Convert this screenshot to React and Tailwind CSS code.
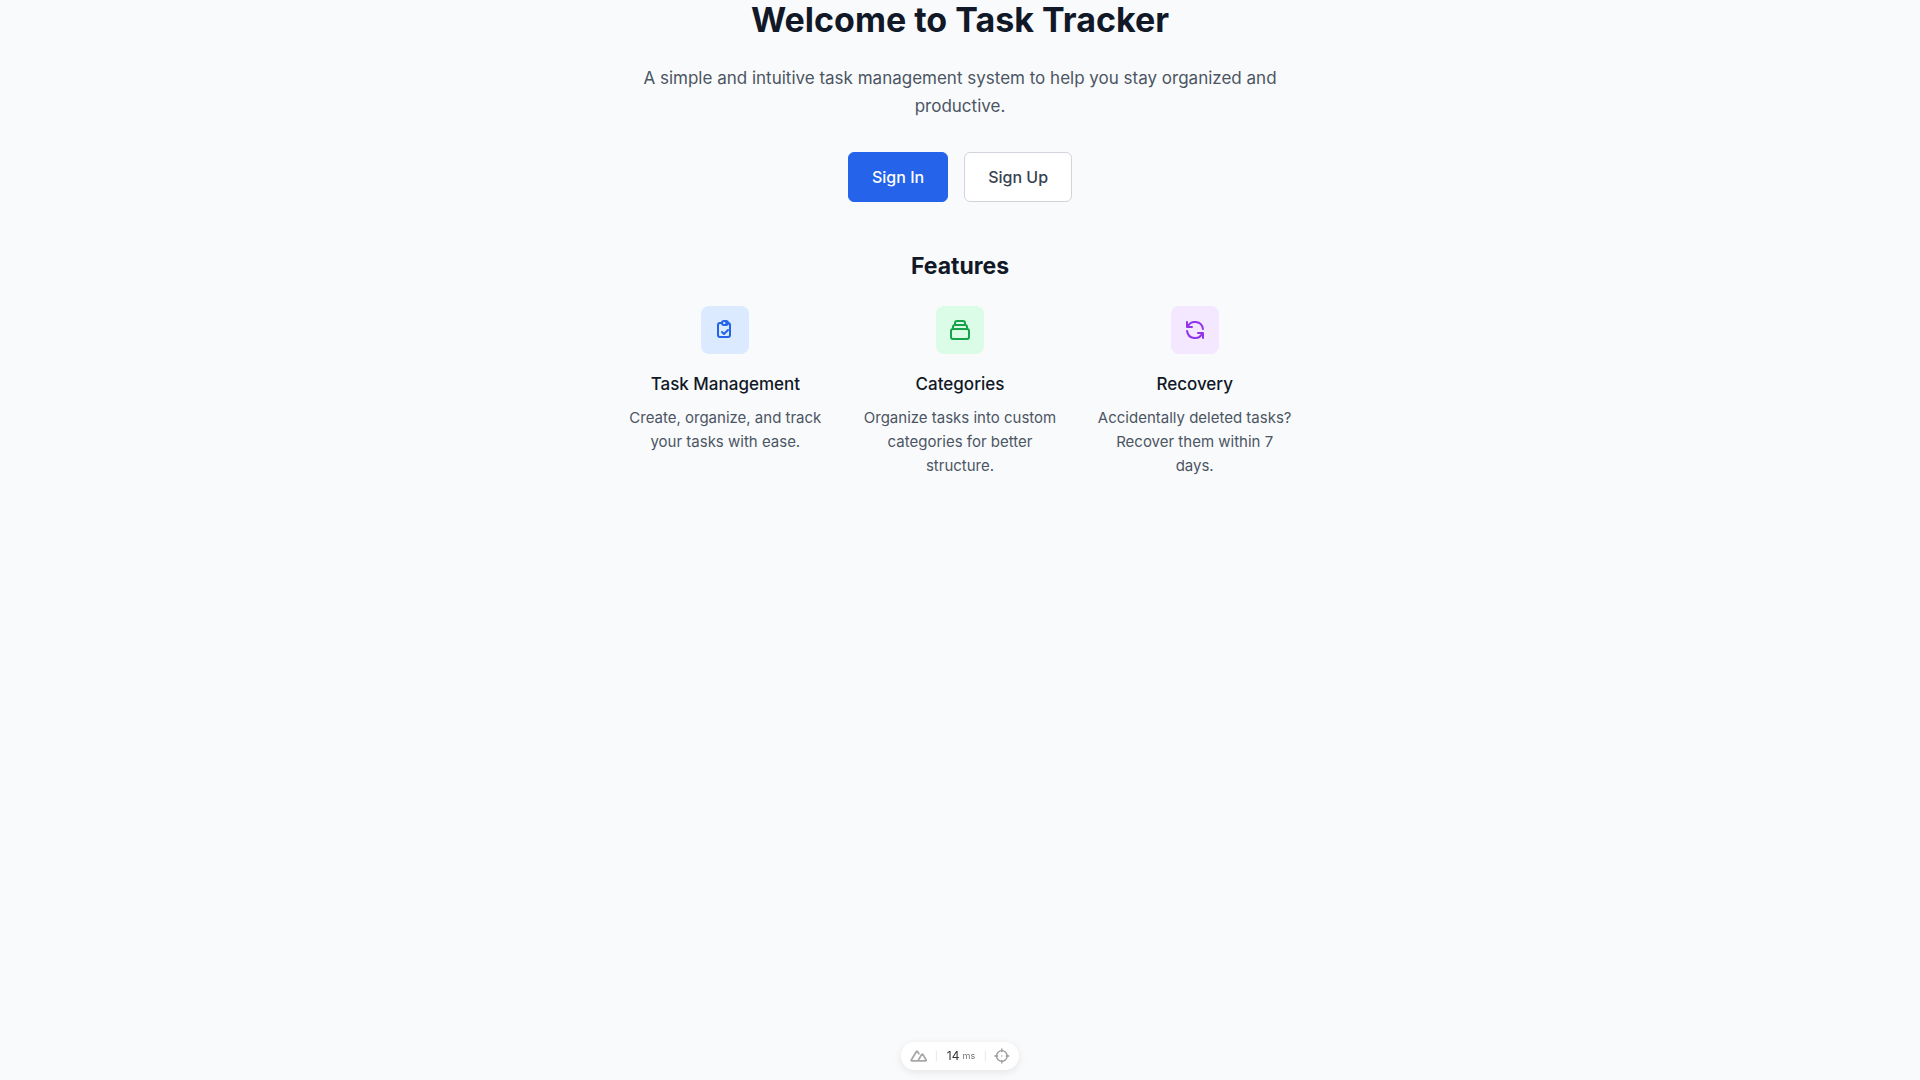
import React from 'react';

const features = [
  {
    title: 'Task Management',
    text: 'Create, organize, and track your tasks with ease.',
    tone: 'bg-blue-100 text-[#2563eb]',
    d: 'M9 5H7a2 2 0 00-2 2v10a2 2 0 002 2h8a2 2 0 002-2V7a2 2 0 00-2-2h-2M9 5a2 2 0 002 2h2a2 2 0 002-2M9 5a2 2 0 012-2h2a2 2 0 012 2m-6 9l2 2 4-4',
  },
  {
    title: 'Categories',
    text: 'Organize tasks into custom categories for better structure.',
    tone: 'bg-green-100 text-[#16a34a]',
    d: 'M19 11H5m14 0a2 2 0 012 2v6a2 2 0 01-2 2H5a2 2 0 01-2-2v-6a2 2 0 012-2m14 0V9a2 2 0 00-2-2M5 11V9a2 2 0 012-2m0 0V5a2 2 0 012-2h6a2 2 0 012 2v2M7 7h10',
  },
  {
    title: 'Recovery',
    text: 'Accidentally deleted tasks? Recover them within 7 days.',
    tone: 'bg-purple-100 text-[#9333ea]',
    d: 'M4 4v5h.582m15.356 2A8.001 8.001 0 004.582 9m0 0H9m11 11v-5h-.581m0 0a8.003 8.003 0 01-15.357-2m15.357 2H15',
  },
];

function Feature({ title, text, tone, d }) {
  return (
    <article className="flex flex-col items-center">
      <div className={`mb-4 flex size-12 items-center justify-center rounded-lg ${tone}`}>
        <svg className="size-6" viewBox="0 0 24 24" fill="none" stroke="currentColor" strokeWidth="2" strokeLinecap="round" strokeLinejoin="round" aria-hidden="true">
          <path d={d} />
        </svg>
      </div>
      <h3 className="mb-2 text-[17px] leading-7 font-medium text-[#111827]">{title}</h3>
      <p className="px-0.5 text-[15px] leading-6 text-[#4b5563]">{text}</p>
    </article>
  );
}

function DevPanel() {
  return (
    <div className="fixed bottom-2.5 left-1/2 flex h-7 -translate-x-1/2 items-center rounded-full bg-white px-[9px] shadow-[0_2px_8px_rgba(0,0,0,0.09)]">
      <button type="button" aria-label="Toggle devtools" className="flex text-[#a8a8a8]">
        <svg className="h-3.5 w-[18px]" viewBox="0 0 20 14" fill="none" stroke="currentColor" strokeWidth="2" strokeLinejoin="round" aria-hidden="true">
          <path d="M10 12.500H2.200c-.6 0-.9-.6-.6-1.100L7.300 2c.3-.5.900-.5 1.200 0l1.900 3.200M10.200 12.500h7.300c.6 0 .9-.6.6-1.100l-3.700-6.200c-.3-.5-.9-.5-1.200 0l-4.300 7.300" />
        </svg>
      </button>
      <span className="mx-2 h-2.5 w-px bg-gray-200" />
      <div className="flex items-center gap-[3px] px-0.5 text-[#333]">
        <span className="text-xs">14</span>
        <span className="text-[9px] text-[#777]">ms</span>
      </div>
      <span className="mx-2 h-2.5 w-px bg-gray-200" />
      <button type="button" aria-label="Inspect component" className="flex text-[#999]">
        <svg className="size-4" viewBox="0 0 24 24" fill="none" stroke="currentColor" strokeWidth="2" strokeLinecap="round" aria-hidden="true">
          <circle cx="12" cy="12" r="8" />
          <path d="M12 1.500v4M12 18.500v4M1.500 12h4M18.500 12h4M12 12h.01" />
        </svg>
      </button>
    </div>
  );
}

export default function App() {
  return (
    <div className="min-h-screen bg-gray-50 font-['Inter',sans-serif] antialiased">
      <main className="mx-auto max-w-2xl text-center">
        <h1 className="mb-6 text-[34px] leading-10 font-bold text-[#111827]">Welcome to Task Tracker</h1>
        <p className="mb-8 text-[17px] leading-7 text-[#4b5563]">
          A simple and intuitive task management system to help you stay organized and productive.
        </p>
        <div className="flex justify-center gap-4">
          <a href="#signin" className="rounded-md border border-[#2563eb] bg-[#2563eb] px-[23px] py-3 text-base font-medium text-white">Sign In</a>
          <a href="#signup" className="rounded-md border border-[#d1d5db] bg-white px-[23px] py-3 text-base font-medium text-[#374151]">Sign Up</a>
        </div>
        <section className="mt-12">
          <h2 className="mb-6 text-[23px] leading-8 font-bold text-[#111827]">Features</h2>
          <div className="grid grid-cols-3 gap-8">
            {features.map((f) => (
              <Feature key={f.title} {...f} />
            ))}
          </div>
        </section>
      </main>
      <DevPanel />
    </div>
  );
}
